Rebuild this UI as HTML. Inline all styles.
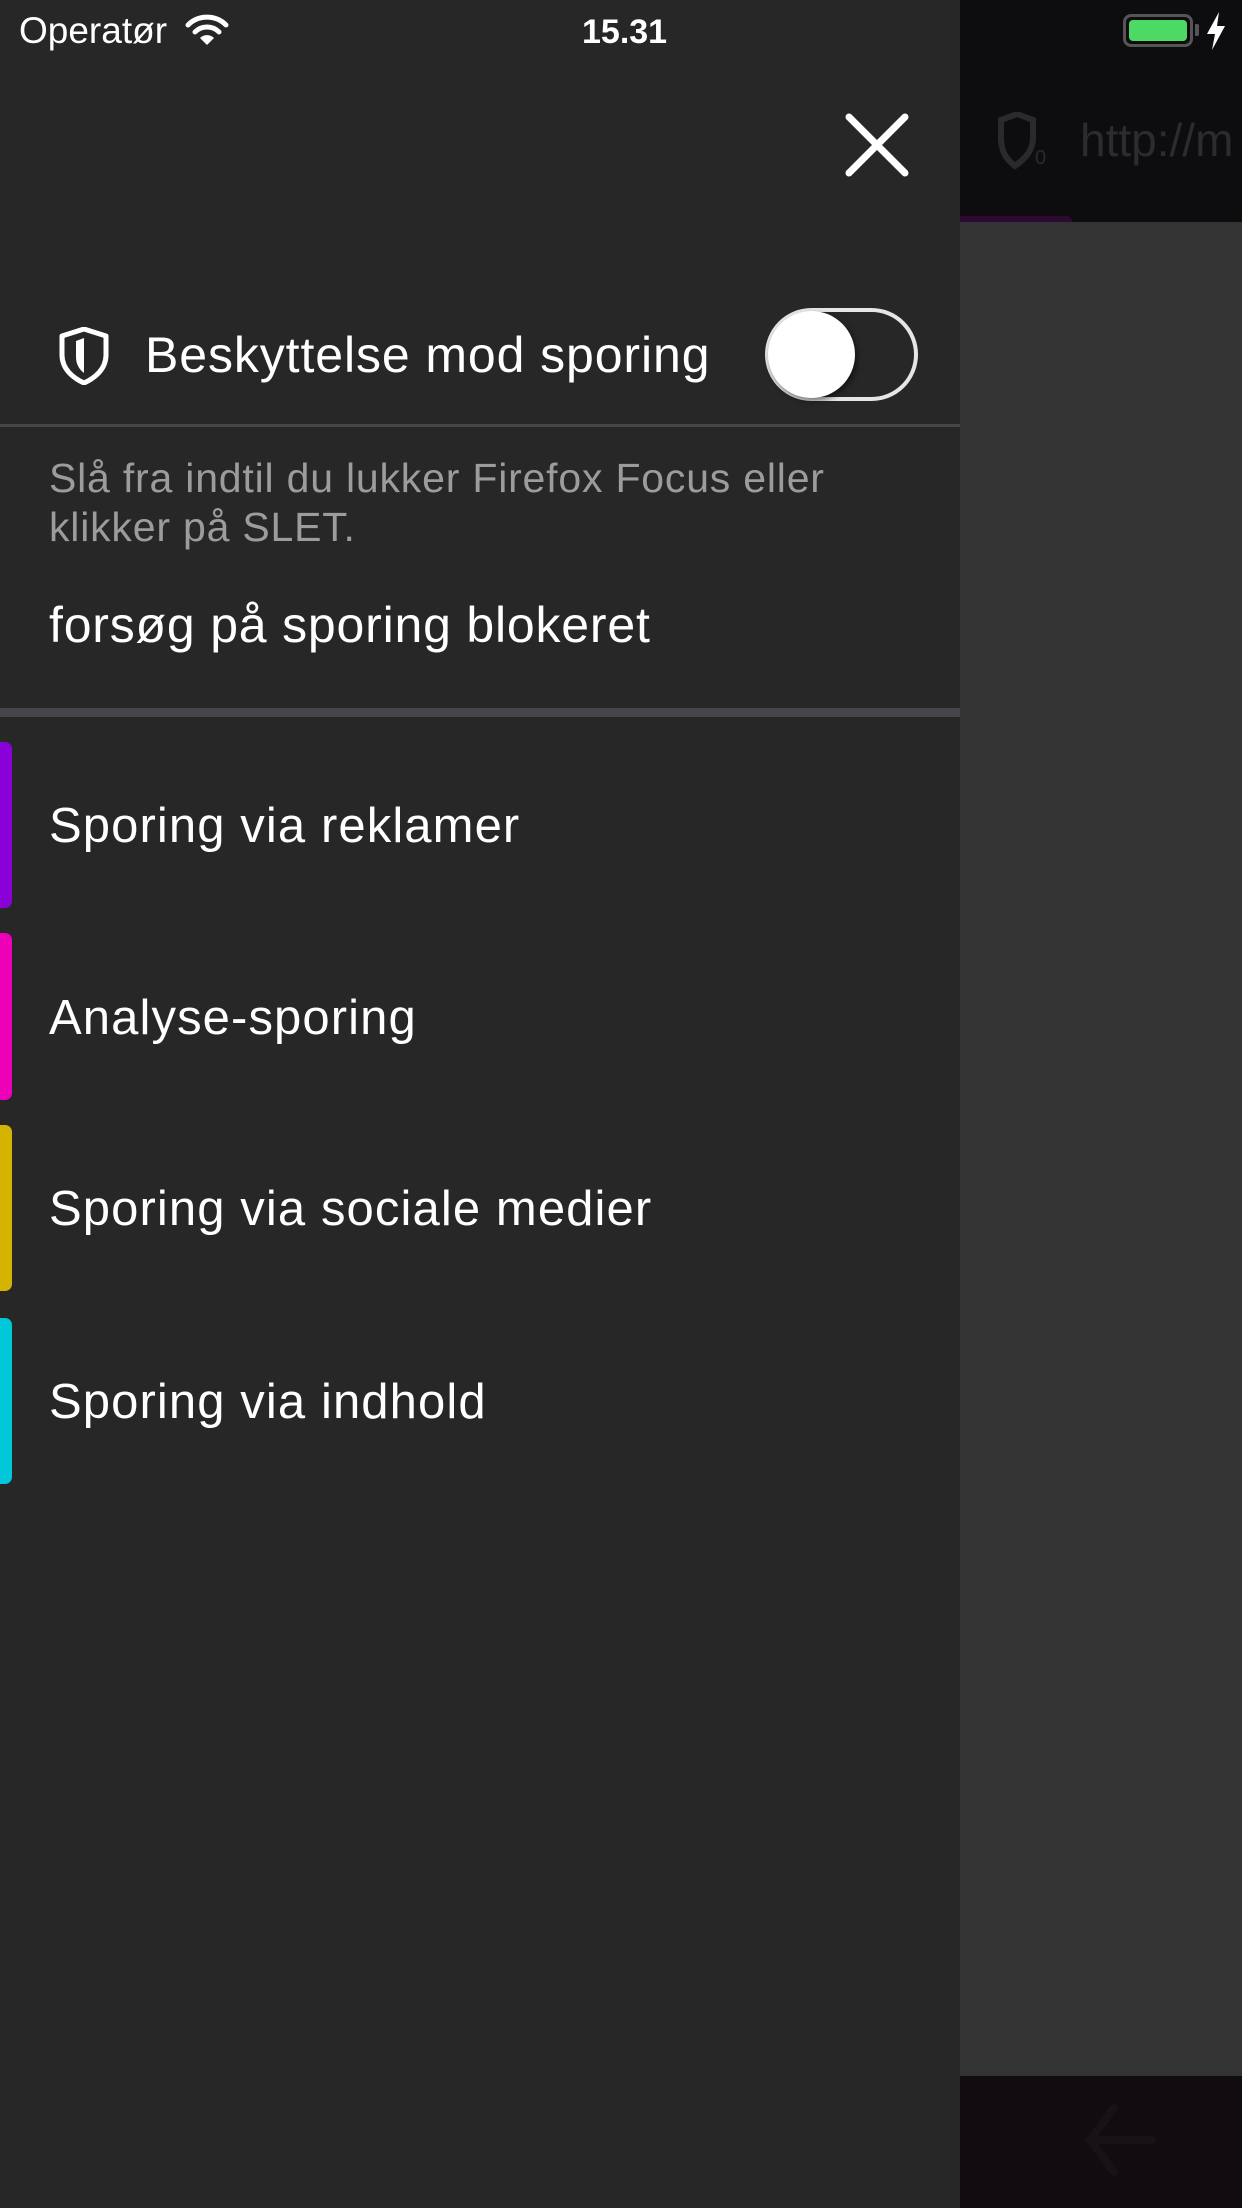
<!DOCTYPE html>
<html><head><meta charset="utf-8"><style>
*{margin:0;padding:0;box-sizing:border-box}
body{width:1242px;height:2208px;overflow:hidden;background:#272727;font-family:"Liberation Sans",sans-serif;position:relative}
.a{position:absolute;white-space:nowrap}
.t{color:#fff;font-size:49px;line-height:60px;letter-spacing:1.1px}
.bar{position:absolute;left:0;width:12px;border-radius:0 7px 7px 0}
</style></head><body>
<div class="a" style="left:960px;top:0;width:282px;height:222px;background:#0d0c0f"></div>
<div class="a" style="left:960px;top:216px;width:112px;height:12px;background:#2e0a33;border-radius:0 6px 6px 0"></div>
<div class="a" style="left:960px;top:222px;width:282px;height:1854px;background:#333333"></div>
<div class="a" style="left:960px;top:2076px;width:282px;height:132px;background:#100c10"></div>
<div class="a" style="left:1080px;top:110px;font-size:46px;color:#2c2c2e;line-height:60px">http://m</div>
<svg class="a" style="left:995px;top:112px" width="60" height="60" viewBox="0 0 60 60"><path d="M6 8 L22 2 L38 8 V26 C38 40 28 48 20 54 C12 48 6 40 6 26 Z" fill="none" stroke="#2a2a2c" stroke-width="6"/><text x="40" y="52" font-size="20" fill="#2a2a2c" font-family="Liberation Sans">0</text></svg>
<svg class="a" style="left:1080px;top:2100px" width="80" height="80" viewBox="0 0 80 80"><path d="M34 8 L10 40 L34 72 M12 40 H72" fill="none" stroke="#161216" stroke-width="8" stroke-linecap="round"/></svg>
<div class="a" style="left:19px;top:9px;font-size:37px;color:#fff;line-height:44px">Operatør</div>
<svg class="a" style="left:185px;top:14px" width="44" height="34" viewBox="0 0 44 34"><path d="M3 11 A27 27 0 0 1 41 11" fill="none" stroke="#fff" stroke-width="5" stroke-linecap="round"/><path d="M10 18 A17 17 0 0 1 34 18" fill="none" stroke="#fff" stroke-width="5" stroke-linecap="round"/><path d="M22 31 L15 24 A10 10 0 0 1 29 24 Z" fill="#fff"/></svg>
<div class="a" style="left:582px;top:10px;font-size:34px;color:#fff;line-height:44px;font-weight:bold">15.31</div>
<div class="a" style="left:1123px;top:14px;width:70px;height:33px;border:3px solid #555;border-radius:8px;padding:3px"><div style="width:100%;height:100%;background:#4cd964;border-radius:4px"></div></div>
<div class="a" style="left:1195px;top:24px;width:4px;height:12px;background:#555;border-radius:0 2px 2px 0"></div>
<svg class="a" style="left:1205px;top:12px" width="22" height="38" viewBox="0 0 22 38"><path d="M14 0 L2 22 H10 L7 38 L20 14 H12 Z" fill="#fff"/></svg>
<svg class="a" style="left:843px;top:111px" width="68" height="68" viewBox="0 0 68 68"><path d="M6 6 L62 62 M62 6 L6 62" stroke="#fff" stroke-width="7" stroke-linecap="round"/></svg>
<svg class="a" style="left:58px;top:327px" width="52" height="58" viewBox="0 0 52 58"><path d="M4 9 L26 2 L48 9 V28 C48 42 37 51 26 56 C15 51 4 42 4 28 Z" fill="none" stroke="#fff" stroke-width="5" stroke-linejoin="round"/><path d="M18 14 L26 11 V46 C22 43 18 38 18 30 Z" fill="#fff"/></svg>
<div class="a t" style="left:145px;top:325px;font-size:50px;letter-spacing:0.9px">Beskyttelse mod sporing</div>
<div class="a" style="left:765px;top:308px;width:153px;height:93px;border-radius:47px;border:4px solid #e6e6e6;background:#272727"></div>
<div class="a" style="left:768px;top:311px;width:87px;height:87px;border-radius:50%;background:#fff;box-shadow:2px 3px 6px rgba(0,0,0,.5)"></div>
<div class="a" style="left:0;top:424px;width:960px;height:3px;background:#45454a"></div>
<div class="a" style="left:49px;top:453px;font-size:41px;color:#9c9c9c;line-height:50px;letter-spacing:0.8px">Slå fra indtil du lukker Firefox Focus eller</div>
<div class="a" style="left:49px;top:502px;font-size:41px;color:#9c9c9c;line-height:50px;letter-spacing:0.8px">klikker på SLET.</div>
<div class="a t" style="left:49px;top:595px;font-size:50px;letter-spacing:0.8px">forsøg på sporing blokeret</div>
<div class="a" style="left:0;top:708px;width:960px;height:9px;background:#45454a"></div>
<div class="bar" style="top:742px;height:166px;background:#8a00d8"></div>
<div class="a t" style="left:49px;top:796px">Sporing via reklamer</div>
<div class="bar" style="top:933px;height:167px;background:#ee00b8"></div>
<div class="a t" style="left:49px;top:988px">Analyse-sporing</div>
<div class="bar" style="top:1125px;height:166px;background:#d4b400"></div>
<div class="a t" style="left:49px;top:1179px">Sporing via sociale medier</div>
<div class="bar" style="top:1318px;height:166px;background:#00c8d8"></div>
<div class="a t" style="left:49px;top:1372px">Sporing via indhold</div>
</body></html>
